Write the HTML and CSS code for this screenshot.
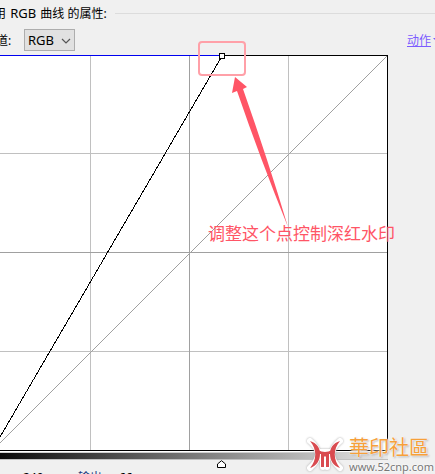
FILE: index.html
```html
<!DOCTYPE html>
<html lang="zh-CN">
<head>
    <meta charset="UTF-8">
    <meta name="viewport" content="width=device-width, initial-scale=1.0">
    <title>RGB 曲线</title>
    <link rel="stylesheet" href="styles.css">
</head>
<body>
    <div class="panel">
        <!-- Panel title -->
        <div class="title-row">
            <h1 class="title">用 <span class="latin">RGB</span> 曲线 的属性:</h1>
            <span class="rule"></span>
        </div>

        <!-- Channel and actions -->
        <div class="toolbar">
            <label class="channel-label" for="channel">通道:</label>
            <div class="select-wrap">
                <select class="channel" id="channel">
                    <option>RGB</option>
                </select>
                <svg class="chevron" width="10" height="6" viewBox="0 0 10 6">
                    <path d="M1 1l4 4 4-4" fill="none" stroke="#555" stroke-width="1.2"/>
                </svg>
            </div>
            <a class="actions" href="#">动作<svg width="8" height="5" viewBox="0 0 8 5"><path d="M0 0h8l-4 4z" fill="#7b5cff"/></svg></a>
        </div>

        <!-- Curve graph -->
        <div class="graph">
            <svg class="curve" viewBox="0 0 388 397" shape-rendering="crispEdges">
                <rect width="388" height="397" fill="#fff"/>
                <path d="M90.5 1v395M288.5 1v395M0 98.5h387M0 296.5h387" stroke="#c0c0c0"/>
                <path d="M189.5 1v395M0 197.5h387" stroke="#a0a0a0"/>
                <path d="M387 1L0 388" stroke="#a0a0a0"/>
                <path d="M222 1L0 382" stroke="#000"/>
                <path d="M222 .5h166M387.5 0v396M0 395.5h388" fill="none" stroke="#000"/>
                <path d="M0 .5h222" stroke="#0000f0"/>
            </svg>
            <button class="point" aria-label="RGB"></button>
            <svg class="arrow" width="58" height="152" viewBox="0 0 58 152">
                <path d="M3 1L15 11 11 13Q36 84 56 151Q28 82 5 15L0 17z" fill="#ff5566"/>
            </svg>
            <span class="callout"></span>
            <span class="note">调整这个点控制深红水印</span>
        </div>
        <div class="ramp"></div>

        <div class="values">
            <svg class="marker" width="9" height="8" viewBox="0 0 9 8">
                <path d="M.5 7.5v-3.5L4.5.7 8.5 4v3.5z" fill="#fff" stroke="#000"/>
            </svg>
            <span class="value input-value">240</span>
            <span class="value output-label">输出:</span>
            <span class="value output-value">66</span>
        </div>

        <!-- Site mark -->
        <div class="mark">
            <svg class="mark-logo" width="36" height="34" viewBox="0 0 36 34">
                <path d="M3 3Q19 16 3 30M33 3Q17 16 33 30M11 14H25M16 15V29M20 15V29" fill="none" stroke="#fff" stroke-width="6" stroke-linecap="round"/>
                <g fill="#d94b50">
                    <path d="M3 3C10 5 13 10 13 16S10 28 3 30C10 22 10 11 3 3z"/>
                    <path d="M33 3C26 5 23 10 23 16S26 28 33 30C26 22 26 11 33 3z"/>
                    <path d="M11 12Q18 16 25 12V16H22V29H19V18L18 19 17 18V29H14V16H11z"/>
                </g>
            </svg>
            <div class="mark-text">
                <span class="mark-name">華印社區</span>
                <span class="mark-url">www.52cnp.com</span>
            </div>
        </div>
    </div>
</body>
</html>
```

FILE: styles.css
```css
* {
    margin: 0;
    padding: 0;
    box-sizing: border-box;
}

body {
    font-family: "Noto Sans", "Noto Sans CJK SC", sans-serif;
    font-size: 12px;
    background: #f0f0f0;
    color: #000;
    overflow: hidden;
}

.panel {
    position: relative;
    min-height: 100vh;
    overflow: hidden;
}

.title-row {
    display: flex;
    align-items: center;
    gap: 8px;
    height: 26px;
    margin-left: -6px;
}

.title {
    font-size: 12px;
    font-weight: 400;
    line-height: 26px;
    white-space: nowrap;
}

.latin {
    margin: 0 1px;
    font-size: 13px;
}

.rule {
    flex: 1;
    height: 1px;
    background: #dcdcdc;
}

.toolbar {
    display: flex;
    align-items: center;
    height: 29px;
    padding-bottom: 1px;
}

.channel-label {
    width: 24px;
    margin-left: -16px;
    margin-right: 16px;
    white-space: nowrap;
}

.select-wrap {
    position: relative;
}

.channel {
    display: block;
    width: 51px;
    height: 22px;
    padding-left: 3px;
    border: 1px solid #adadad;
    border-radius: 0;
    background: #e1e1e1;
    font: inherit;
    font-size: 13px;
    color: #000;
    appearance: none;
}

.chevron {
    position: absolute;
    top: 9px;
    right: 4px;
    pointer-events: none;
}

.actions {
    display: flex;
    align-items: center;
    gap: 2px;
    margin-left: auto;
    margin-right: -6px;
    color: #7b5cff;
    white-space: nowrap;
}

.graph {
    position: relative;
    margin-right: 47px;
}

.curve {
    display: block;
    width: 100%;
}

.point {
    position: absolute;
    top: -2px;
    left: 219px;
    width: 6px;
    height: 6px;
    border: 1px solid #000;
    background: #fff;
}

.callout {
    position: absolute;
    top: -14px;
    left: 198px;
    width: 48px;
    height: 35px;
    border: 2px solid #ffa0a8;
    border-radius: 4px;
}

.arrow {
    position: absolute;
    top: 21px;
    left: 232px;
}

.note {
    position: absolute;
    top: 166px;
    left: 208px;
    font-size: 17px;
    line-height: 26px;
    color: #ff5566;
    white-space: nowrap;
}

.ramp {
    height: 8px;
    margin-right: 47px;
    border-top: 1px solid #d0d0d0;
    border-bottom: 1px solid #c0c0c0;
    background: linear-gradient(to right, #0a0a0a, #e8e8e8);
}

.values {
    position: relative;
    height: 14px;
    overflow: hidden;
}

.marker {
    position: absolute;
    top: 0;
    left: 217px;
}

.value {
    position: absolute;
    top: 10px;
    line-height: 16px;
}

.input-value {
    left: 23px;
}

.output-label {
    left: 78px;
    color: #223a80;
}

.output-value {
    left: 119px;
}

.mark {
    position: absolute;
    left: 307px;
    bottom: 0;
    display: flex;
    align-items: center;
    gap: 6px;
}

.mark-logo {
    filter: drop-shadow(0 0 1px #aaa);
}

.mark-text {
    display: flex;
    flex-direction: column;
}

.mark-name {
    font-size: 20px;
    line-height: 24px;
    color: #f6a03a;
    text-shadow: 0 0 2px #fff, 0 0 2px #fff, 1px 1px 2px #999;
    white-space: nowrap;
}

.mark-url {
    font-size: 11px;
    line-height: 14px;
    color: #777;
    text-shadow: 0 0 2px #fff, 0 0 2px #fff;
}
```
